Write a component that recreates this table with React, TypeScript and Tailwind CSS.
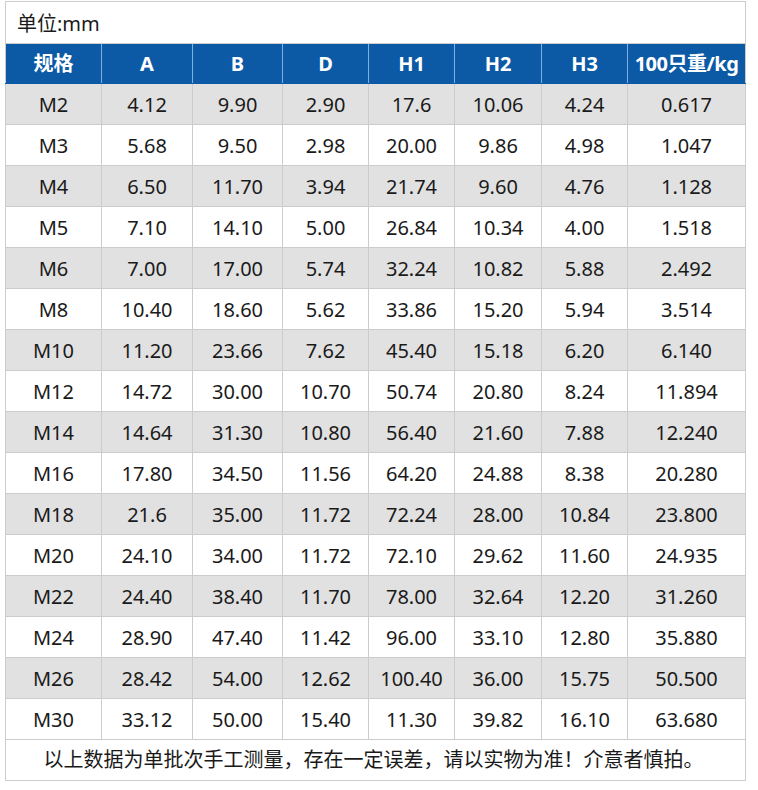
import React from "react";

const cols = ["规格", "A", "B", "D", "H1", "H2", "H3", "100只重/kg"];
const widths = ["w-[96px]", "w-[91px]", "w-[90px]", "w-[86px]", "w-[86px]", "w-[87px]", "w-[86px]", "w-[118px]"];

const rows: string[][] = [
  ["M2", "4.12", "9.90", "2.90", "17.6", "10.06", "4.24", "0.617"],
  ["M3", "5.68", "9.50", "2.98", "20.00", "9.86", "4.98", "1.047"],
  ["M4", "6.50", "11.70", "3.94", "21.74", "9.60", "4.76", "1.128"],
  ["M5", "7.10", "14.10", "5.00", "26.84", "10.34", "4.00", "1.518"],
  ["M6", "7.00", "17.00", "5.74", "32.24", "10.82", "5.88", "2.492"],
  ["M8", "10.40", "18.60", "5.62", "33.86", "15.20", "5.94", "3.514"],
  ["M10", "11.20", "23.66", "7.62", "45.40", "15.18", "6.20", "6.140"],
  ["M12", "14.72", "30.00", "10.70", "50.74", "20.80", "8.24", "11.894"],
  ["M14", "14.64", "31.30", "10.80", "56.40", "21.60", "7.88", "12.240"],
  ["M16", "17.80", "34.50", "11.56", "64.20", "24.88", "8.38", "20.280"],
  ["M18", "21.6", "35.00", "11.72", "72.24", "28.00", "10.84", "23.800"],
  ["M20", "24.10", "34.00", "11.72", "72.10", "29.62", "11.60", "24.935"],
  ["M22", "24.40", "38.40", "11.70", "78.00", "32.64", "12.20", "31.260"],
  ["M24", "28.90", "47.40", "11.42", "96.00", "33.10", "12.80", "35.880"],
  ["M26", "28.42", "54.00", "12.62", "100.40", "36.00", "15.75", "50.500"],
  ["M30", "33.12", "50.00", "15.40", "11.30", "39.82", "16.10", "63.680"],
];

export default function App() {
  return (
    <div
      className="bg-white w-[758px] h-[790px] pt-[1px] pl-[5px]"
      style={{ fontFamily: '"Noto Sans", "Noto Sans CJK SC", sans-serif' }}
    >
      <table className="table-fixed border-collapse w-[741px] text-[20px] text-[#1a1a1a]">
        <colgroup>
          {widths.map((w, i) => (
            <col key={i} className={w} />
          ))}
        </colgroup>
        <tbody>
          <tr className="h-[42px]">
            <td colSpan={8} className="border border-[#cccccc] pl-[11px] pt-[2px] text-left leading-none">
              单位:mm
            </td>
          </tr>
          <tr className="h-[40px] bg-[#0c5aa6]">
            {cols.map((c, i) => (
              <td
                key={i}
                className={`border-y border-y-[#0c5aa6] ${i === 0 ? "border-l-[#cccccc]" : "border-l-[#7fb0e0]"} ${i === 7 ? "border-r-[#cccccc] tracking-[-0.5px]" : "border-r-[#7fb0e0]"} border-x text-center font-bold text-white leading-none whitespace-nowrap`}
              >
                {c}
              </td>
            ))}
          </tr>
          {rows.map((r, ri) => (
            <tr key={ri} className={`h-[41px] ${ri % 2 === 0 ? "bg-[#e1e1e1]" : "bg-white"}`}>
              {r.map((v, ci) => (
                <td key={ci} className="border border-[#cccccc] text-center leading-none pt-[1px]">
                  {v}
                </td>
              ))}
            </tr>
          ))}
          <tr className="h-[41px]">
            <td colSpan={8} className="border border-[#cccccc] text-center leading-none pr-[4px]">
              以上数据为单批次手工测量，存在一定误差，请以实物为准！介意者慎拍。
            </td>
          </tr>
        </tbody>
      </table>
    </div>
  );
}
